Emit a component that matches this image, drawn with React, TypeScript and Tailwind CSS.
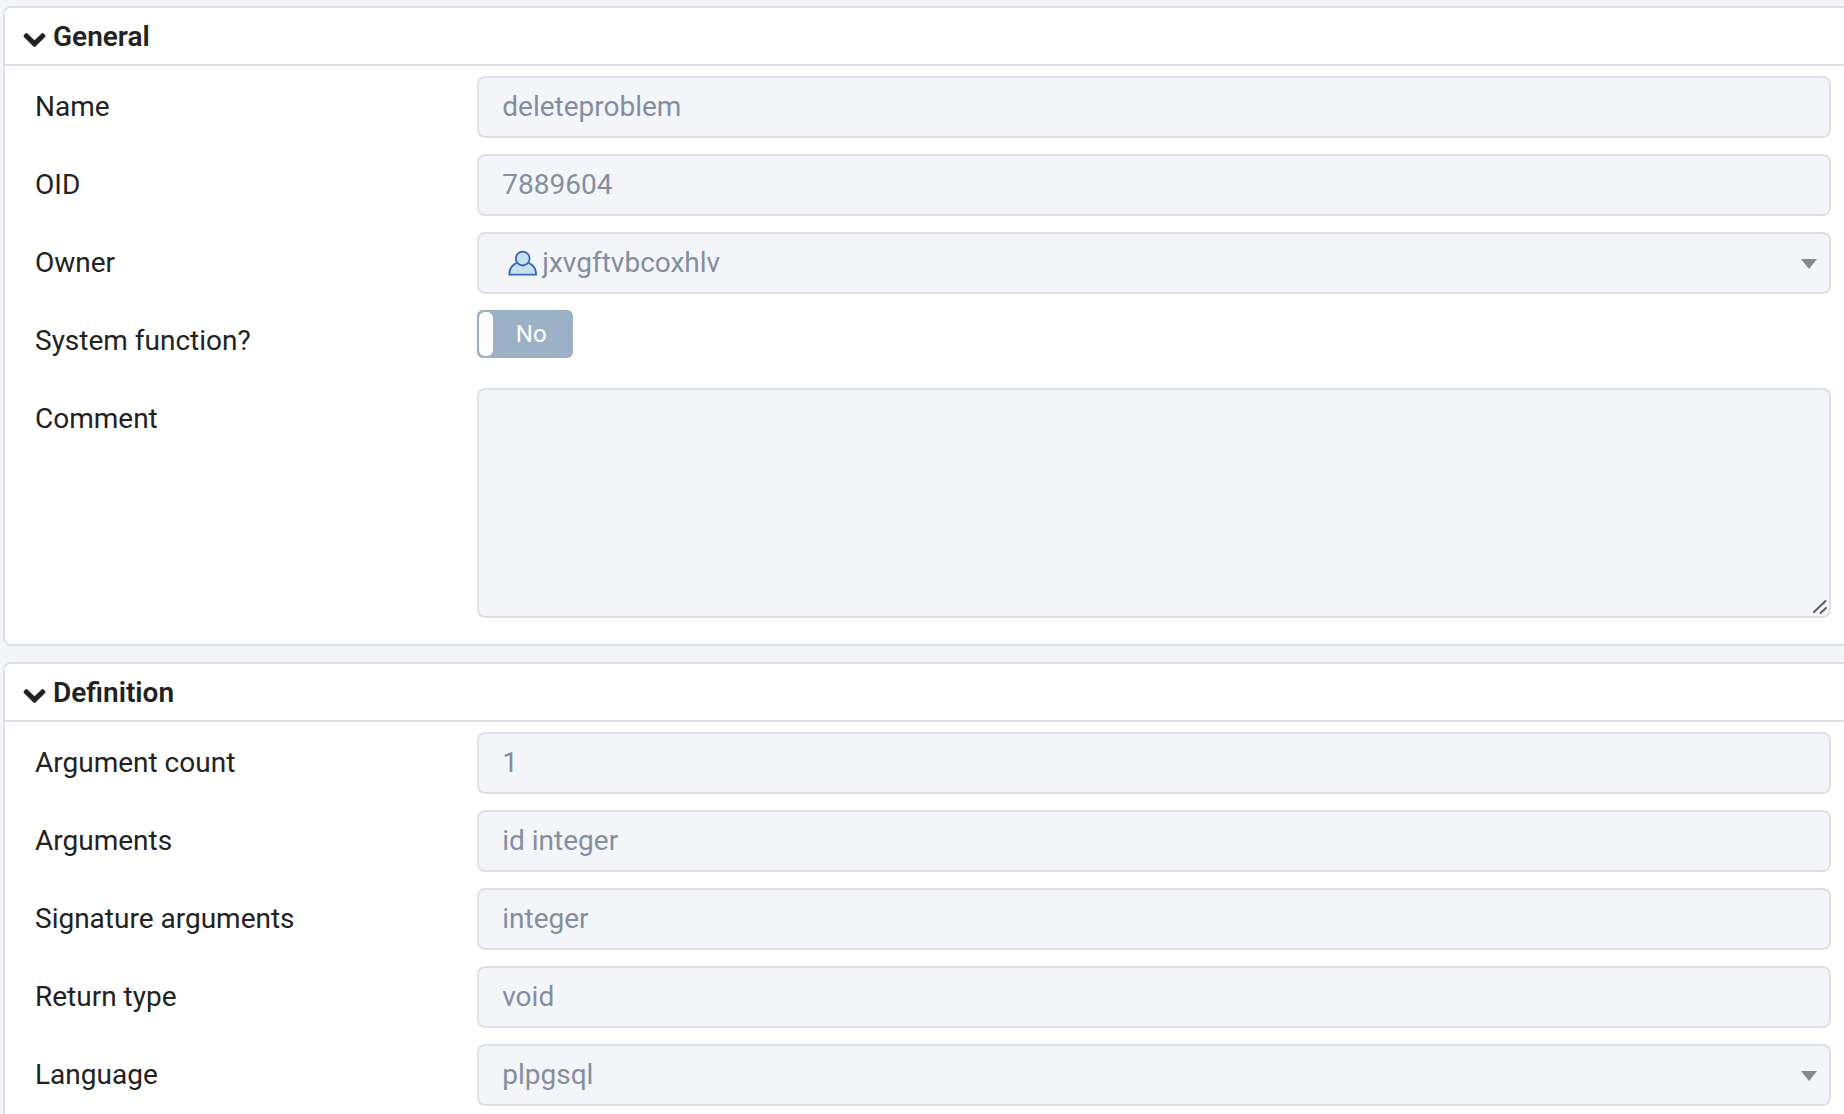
import { useId, useState } from "react";
import type { ReactNode } from "react";
import { FaChevronDown } from "react-icons/fa";

const fieldClass =
  "block w-full rounded-lg border-2 border-[#dde0e6] bg-[#f3f5f9] text-[28px] text-[#848ea0] opacity-100 outline-none";

interface SectionProps {
  title: string;
  children: ReactNode;
}

function Section({ title, children }: SectionProps) {
  const [isOpen, setIsOpen] = useState(true);

  return (
    <section className="rounded-l-lg border-2 border-r-0 border-[#dde0e6] bg-white">
      <h2>
        <button
          type="button"
          aria-expanded={isOpen}
          onClick={() => setIsOpen(!isOpen)}
          className="flex h-14 w-full items-center gap-2 pt-0.5 pl-[19px] text-[28px] font-semibold cursor-pointer"
        >
          <FaChevronDown
            strokeWidth={28}
            className={`mt-1.5 h-6 w-[21px] overflow-visible ${
              isOpen ? "" : "-rotate-90"
            }`}
          />
          {title}
        </button>
      </h2>
      {isOpen && (
        <div className="flex flex-col gap-4 border-t-2 border-[#dde0e6] pt-[10px] pr-[13px] pb-[26px] pl-[21px]">
          {children}
        </div>
      )}
    </section>
  );
}

interface RowProps {
  label: string;
  htmlFor: string;
  children: ReactNode;
}

function Row({ label, htmlFor, children }: RowProps) {
  return (
    <div className="grid grid-cols-4 items-start">
      <label htmlFor={htmlFor} className="pl-[9px] text-[28px] leading-[62px]">
        {label}
      </label>
      <div className="col-span-3">{children}</div>
    </div>
  );
}

function TextField({ label, value }: { label: string; value: string }) {
  const id = useId();

  return (
    <Row label={label} htmlFor={id}>
      <input
        id={id}
        type="text"
        value={value}
        disabled
        className={`${fieldClass} h-[62px] px-[23px] pb-0.5`}
      />
    </Row>
  );
}

interface SelectFieldProps {
  label: string;
  value: string;
  icon?: ReactNode;
}

function SelectField({ label, value, icon }: SelectFieldProps) {
  const id = useId();

  return (
    <Row label={label} htmlFor={id}>
      <div className="relative">
        <select
          id={id}
          value={value}
          disabled
          className={`${fieldClass} h-[62px] appearance-none pr-12 ${
            icon ? "pl-[63px]" : "pl-[23px]"
          }`}
        >
          <option value={value}>{value}</option>
        </select>
        {icon && (
          <span className="pointer-events-none absolute inset-y-0 left-[31px] flex items-center">
            {icon}
          </span>
        )}
        <span className="pointer-events-none absolute inset-y-0 right-3.5 flex items-center">
          <svg viewBox="0 0 16 10" className="mt-0.5 h-2.5 w-4" fill="#888888">
            <path d="M0 0h16L8 10z" />
          </svg>
        </span>
      </div>
    </Row>
  );
}

function SwitchField({ label }: { label: string }) {
  const id = useId();

  return (
    <Row label={label} htmlFor={id}>
      <div className="relative flex h-12 w-24 rounded-md bg-[#9db1c6] p-0.5">
        <input
          id={id}
          type="checkbox"
          role="switch"
          checked={false}
          disabled
          className="absolute inset-0 appearance-none"
        />
        <span className="w-3.5 rounded-md bg-[#fcfefe]" />
        <span className="flex-1 pr-0.5 text-center text-2xl leading-11 text-white">
          No
        </span>
      </div>
    </Row>
  );
}

function CommentField({ label }: { label: string }) {
  const id = useId();

  return (
    <Row label={label} htmlFor={id}>
      <div className="relative">
        <textarea
          id={id}
          value=""
          disabled
          className={`${fieldClass} h-[230px] resize-none px-[23px] py-2`}
        />
        <svg
          viewBox="0 0 14 14"
          className="pointer-events-none absolute right-1 bottom-1 h-3.5 w-3.5"
          fill="none"
          stroke="#5c5e62"
          strokeWidth="2"
          strokeLinecap="round"
        >
          <path d="M1 12L12.5 1M7.5 13L13 8" />
        </svg>
      </div>
    </Row>
  );
}

function RoleIcon() {
  return (
    <svg
      viewBox="0 0 30 26"
      className="h-[26px] w-[30px]"
      fill="#c7e2ee"
      stroke="#3567bd"
      strokeWidth="1.8"
    >
      <path d="M1.3 24.6C1.3 17 7 11.6 14.7 11.6s13.4 5.4 13.4 13z" />
      <circle cx="14.7" cy="8.6" r="6.9" />
    </svg>
  );
}

export default function App() {
  return (
    <main className="flex h-screen flex-col gap-4 overflow-y-auto bg-[#f3f5f9] pt-1.5 pl-[3px] font-['Roboto',sans-serif] text-[#222222] [scrollbar-width:none] *:shrink-0">
      <Section title="General">
        <TextField label="Name" value="deleteproblem" />
        <TextField label="OID" value="7889604" />
        <SelectField label="Owner" value="jxvgftvbcoxhlv" icon={<RoleIcon />} />
        <SwitchField label="System function?" />
        <CommentField label="Comment" />
      </Section>
      <Section title="Definition">
        <TextField label="Argument count" value="1" />
        <TextField label="Arguments" value="id integer" />
        <TextField label="Signature arguments" value="integer" />
        <TextField label="Return type" value="void" />
        <SelectField label="Language" value="plpgsql" />
      </Section>
    </main>
  );
}
